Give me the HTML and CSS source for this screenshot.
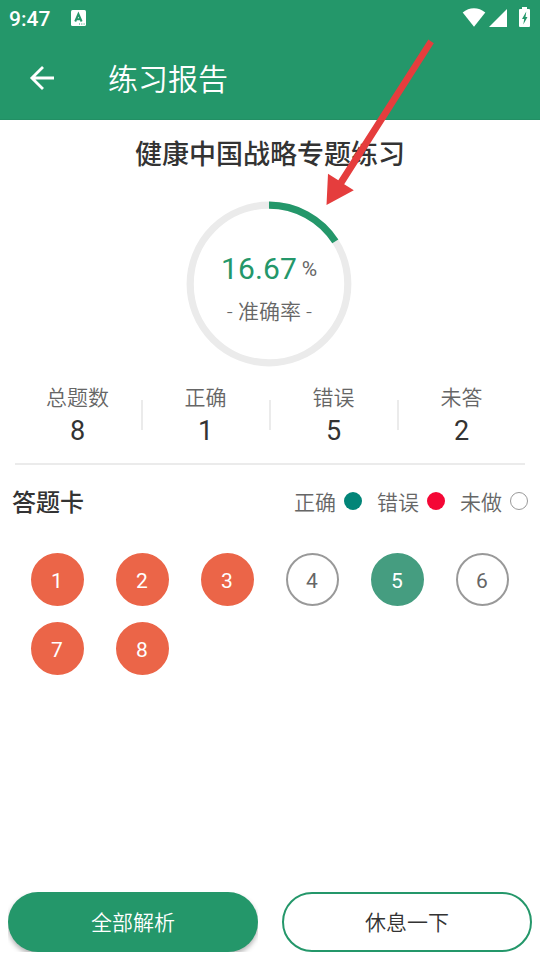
FILE: index.html
```html
<!DOCTYPE html>
<html lang="zh-CN">
<head>
<meta charset="utf-8">
<title>练习报告</title>
<link rel="stylesheet" href="styles.css">
</head>
<body>
<header class="header">
  <div class="status">
    <span class="time">9:47</span>
    <svg class="notice" width="15" height="16" viewBox="0 0 15 16"><rect width="15" height="16" rx="1.5" fill="#fff"/><path d="M4.2 11.5 7.4 4l3.2 7.5M5.3 9.2h4.2" fill="none" stroke="#24976a" stroke-width="2"/><path d="M8 14h1M10.3 14h1M12.6 14h1" stroke="#24976a"/></svg>
    <svg class="signals" width="70" height="22" viewBox="0 0 70 22"><g fill="#fff"><path d="M2.7 6.6C9.2.8 18.7.8 25.3 6.6L14 20.7z"/><path d="M47 3v18H29z"/><path d="M62 1h5v2h2q1 0 1 1v16q0 1-1 1h-9q-1 0-1-1V4q0-1 1-1h2z"/></g><path d="M66.3 5.5 62 13h2.2l-.9 5.5 4.2-7.5h-2z" fill="#24976a"/></svg>
  </div>
  <div class="toolbar">
    <svg width="26" height="26" viewBox="0 0 26 26"><path d="M25 13H3M14 2 2.9 13 14 24" fill="none" stroke="#fff" stroke-width="2.8"/></svg>
    <h1>练习报告</h1>
  </div>
</header>
<main>
  <h2 class="title">健康中国战略专题练习</h2>
  <section class="gauge">
    <svg class="ring" width="166" height="166" viewBox="0 0 166 166"><circle cx="83" cy="83" r="78.8" fill="none" stroke="#ebebeb" stroke-width="7.2"/><path d="M83 4.2a78.8 78.8 0 0 1 66.3 36.2" fill="none" stroke="#24976a" stroke-width="7.2"/></svg>
    <div class="reading">
      <div class="score"><span class="value">16.67</span><span class="percent">%</span></div>
      <div class="caption">- 准确率 -</div>
    </div>
  </section>
  <section class="stats">
    <div class="stat"><span>总题数</span><b>8</b></div>
    <div class="stat"><span>正确</span><b>1</b></div>
    <div class="stat"><span>错误</span><b>5</b></div>
    <div class="stat"><span>未答</span><b>2</b></div>
  </section>
  <section class="card-head">
    <h3>答题卡</h3>
    <div class="legend">
      <span class="key"><span class="label">正确</span><i class="dot right"></i></span>
      <span class="key"><span class="label">错误</span><i class="dot wrong"></i></span>
      <span class="key"><span class="label">未做</span><i class="dot"></i></span>
    </div>
  </section>
  <section class="answers">
    <span class="num wrong">1</span><span class="num wrong">2</span><span class="num wrong">3</span><span class="num">4</span><span class="num right">5</span><span class="num">6</span><span class="num wrong">7</span><span class="num wrong">8</span>
  </section>
</main>
<footer class="actions">
  <div class="clip"><button class="btn primary">全部解析</button></div>
  <button class="btn outline">休息一下</button>
</footer>
<svg class="pointer" width="110" height="168" viewBox="326 39 110 168"><path d="M428.4 39.5 433.8 43.2 344.2 184.2 353.8 190.2 326.5 205 328 173.8 338.3 180.3z" fill="#e53d3d"/></svg>
</body>
</html>
```

FILE: styles.css
```css
* { box-sizing: border-box; }
body {
  margin: 0;
  width: 540px;
  height: 960px;
  display: flex;
  flex-direction: column;
  position: relative;
  overflow: hidden;
  background: #fff;
  color: #333;
  font-family: Roboto, "Noto Sans CJK SC", sans-serif;
}
h1, h2, h3 { margin: 0; }
.header { height: 120px; background: #24976a; color: #fff; box-shadow: inset 0 -1px #228f64; }
.status { height: 36px; padding: 0 10px 0 9px; display: flex; align-items: center; }
.time { font-size: 21px; font-weight: 500; line-height: 36px; padding-top: 1px; width: 62px; }
.signals { margin-left: auto; margin-bottom: 2px; }
.toolbar { height: 84px; padding: 0 29px; display: flex; align-items: center; gap: 53px; }
.toolbar h1 { font-size: 30px; font-weight: 350; line-height: 40px; padding-top: 3px; }
main { flex: 1; }
.title { font-size: 27px; font-weight: 500; line-height: 40px; text-align: center; padding-top: 15px; }
.gauge { display: grid; width: 166px; height: 166px; margin: 26px 0 0 186px; }
.ring, .reading { grid-area: 1 / 1; }
.reading { padding-top: 50px; color: #666; }
.score { display: flex; height: 36px; padding-left: 35px; gap: 5px; line-height: 36px; }
.value { font-size: 30px; letter-spacing: .1px; color: #24976a; }
.percent { font-size: 21px; }
.caption { font-size: 21px; font-weight: 350; line-height: 30px; margin-top: 10px; text-align: center; padding-left: 1px; }
.stats { display: grid; grid-template-columns: repeat(4, 128px); margin: 0 15px; padding: 15px 0 17px; height: 98px; border-bottom: 2px solid #ebebeb; }
.stat { display: flex; flex-direction: column; align-items: center; padding-right: 3px; font-size: 21px; font-weight: 350; color: #666; line-height: 32px; background: linear-gradient(#ebebeb, #ebebeb) right 18px / 2px 30px no-repeat; }
.stat:last-child { background: none; }
.stat b { font-size: 27px; font-weight: 400; line-height: 34px; color: #333; }
.card-head { display: flex; justify-content: space-between; align-items: center; height: 72px; padding: 0 12px; }
.card-head h3 { font-size: 24px; font-weight: 500; line-height: 36px; padding-top: 4px; }
.legend { display: flex; gap: 15px; font-size: 21px; font-weight: 350; line-height: 32px; color: #666; }
.key { display: flex; align-items: center; gap: 8px; }
.label { padding-top: 3px; margin-bottom: -1px; }
.dot { width: 18px; height: 18px; border-radius: 50%; border: 1.5px solid #999; }
.dot.right { background: #028578; border: 0; }
.dot.wrong { background: #f40735; border: 0; }
.answers { display: grid; grid-template-columns: repeat(6, 53px); column-gap: 32px; row-gap: 16px; padding: 16px 0 0 31px; }
.num { width: 53px; height: 53px; border: 2px solid #999; border-radius: 50%; display: flex; align-items: center; justify-content: center; font-size: 21px; line-height: 24px; padding: 3px 1px 0 0; color: #666; }
.num.wrong { background: #eb6548; border-color: #eb6548; color: #fff; }
.num.right { background: #459d80; border-color: #459d80; color: #fff; }
.actions { display: flex; justify-content: space-between; padding: 0 8px 8px; }
.clip { height: 60px; overflow: hidden; }
.btn { width: 250px; height: 60px; border-radius: 30px; border: 0; padding: 2px 0 0; font: 350 21px/30px Roboto, "Noto Sans CJK SC", sans-serif; color: #333; }
.primary { background: #24976a; color: #fff; box-shadow: 0 3px 5px rgba(0, 0, 0, .3); }
.outline { background: #fff; border: 2px solid #24976a; }
.pointer { position: absolute; left: 326px; top: 39px; }
```
